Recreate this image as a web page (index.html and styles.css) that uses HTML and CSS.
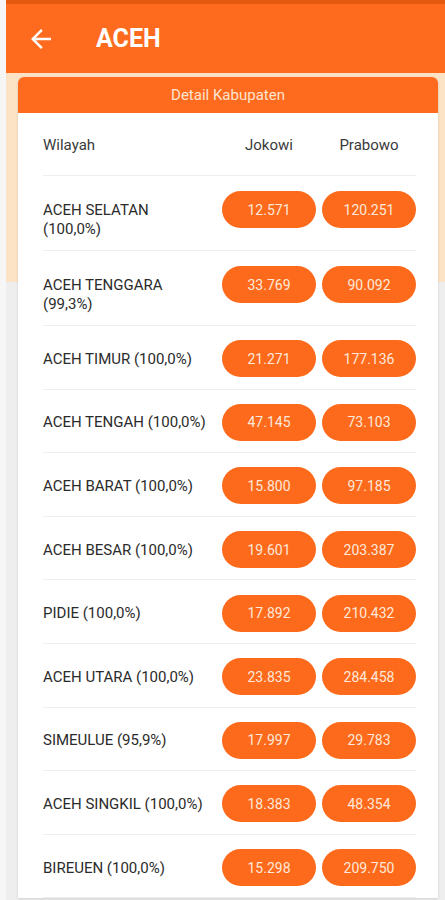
FILE: index.html
```html
<!DOCTYPE html>
<html lang="id">
	<head>
		<meta charset="UTF-8" />
		<meta name="viewport" content="width=device-width, initial-scale=1.0" />

		<link rel="stylesheet" href="styles.css">

		<title>ACEH</title>
	</head>
	<body>
		<div class="screen">
			<div class="status"></div>
			<header class="appbar">
				<svg class="back" viewBox="0 0 24 24" width="30" height="30">
					<path d="M20 11H7.83l5.59-5.59L12 4l-8 8 8 8 1.41-1.41L7.83 13H20v-2z" fill="#fff" />
				</svg>
				<h1>ACEH</h1>
			</header>

			<main class="content">
				<div class="card">
					<div class="card-title">Detail Kabupaten</div>
					<div class="list">
						<div class="row head">
							<span class="name">Wilayah</span>
							<span class="col">Jokowi</span>
							<span class="col">Prabowo</span>
						</div>
						<div class="row tall">
							<span class="name">ACEH SELATAN<br>(100,0%)</span>
							<span class="pill">12.571</span>
							<span class="pill">120.251</span>
						</div>
						<div class="row tall">
							<span class="name">ACEH TENGGARA<br>(99,3%)</span>
							<span class="pill">33.769</span>
							<span class="pill">90.092</span>
						</div>
						<div class="row">
							<span class="name">ACEH TIMUR (100,0%)</span>
							<span class="pill">21.271</span>
							<span class="pill">177.136</span>
						</div>
						<div class="row">
							<span class="name">ACEH TENGAH (100,0%)</span>
							<span class="pill">47.145</span>
							<span class="pill">73.103</span>
						</div>
						<div class="row">
							<span class="name">ACEH BARAT (100,0%)</span>
							<span class="pill">15.800</span>
							<span class="pill">97.185</span>
						</div>
						<div class="row">
							<span class="name">ACEH BESAR (100,0%)</span>
							<span class="pill">19.601</span>
							<span class="pill">203.387</span>
						</div>
						<div class="row">
							<span class="name">PIDIE (100,0%)</span>
							<span class="pill">17.892</span>
							<span class="pill">210.432</span>
						</div>
						<div class="row">
							<span class="name">ACEH UTARA (100,0%)</span>
							<span class="pill">23.835</span>
							<span class="pill">284.458</span>
						</div>
						<div class="row">
							<span class="name">SIMEULUE (95,9%)</span>
							<span class="pill">17.997</span>
							<span class="pill">29.783</span>
						</div>
						<div class="row">
							<span class="name">ACEH SINGKIL (100,0%)</span>
							<span class="pill">18.383</span>
							<span class="pill">48.354</span>
						</div>
						<div class="row">
							<span class="name">BIREUEN (100,0%)</span>
							<span class="pill">15.298</span>
							<span class="pill">209.750</span>
						</div>
					</div>
				</div>
			</main>
		</div>
	</body>
</html>
```

FILE: styles.css
```css
body {
	margin: 0;
	height: 900px;
	overflow: hidden;
	background-color: #f6f6f6;
	font-family: Roboto, "Noto Sans", sans-serif;
}

.screen {
	margin-left: 6px;
	height: 900px;
	overflow: hidden;
}

.status {
	height: 4px;
	background-color: #e4580f;
}

.appbar {
	height: 69px;
	display: flex;
	align-items: center;
	background-color: #fe6b1e;
	color: white;

	.back {
		margin-left: 20px;
	}

	h1 {
		margin: 0 0 0 40px;
		font-size: 25px;
		font-weight: bold;
	}
}

.content {
	height: 827px;
	padding-top: 4px;
	box-sizing: border-box;
	background: linear-gradient(#fde3c6 0 209px, #eeeeee 209px);
}

.card {
	margin: 0 7px 0 12px;
	background-color: white;
	border-radius: 6px 6px 0 0;
	overflow: hidden;
	box-shadow: 0 1px 3px rgba(0, 0, 0, 0.12);
}

.card-title {
	height: 36px;
	display: flex;
	align-items: center;
	justify-content: center;
	background-color: #fe6b1e;
	color: #fde4cf;
	font-size: 15px;
}

.list {
	padding: 0 22px 0 25px;
}

.row {
	display: grid;
	grid-template-columns: 1fr 94px 94px;
	gap: 6px;
	align-items: center;
	padding: 14.3px 0 11.3px;
	border-bottom: 1px solid #efefef;
	font-size: 15px;
	line-height: 18px;
	color: #2b2b2b;

	&.head {
		padding: 22.5px 0 21.5px;
		color: #3a3a3a;

		.col {
			text-align: center;
		}
	}

	&.tall {
		align-items: start;
		padding: 15px 0 11.5px;

		.name {
			padding-top: 9.5px;
			line-height: 19px;
		}
	}
}

.pill {
	height: 37px;
	display: flex;
	align-items: center;
	justify-content: center;
	border-radius: 19px;
	background-color: #fd6a1c;
	color: #fde8da;
	font-size: 14px;
}
```
